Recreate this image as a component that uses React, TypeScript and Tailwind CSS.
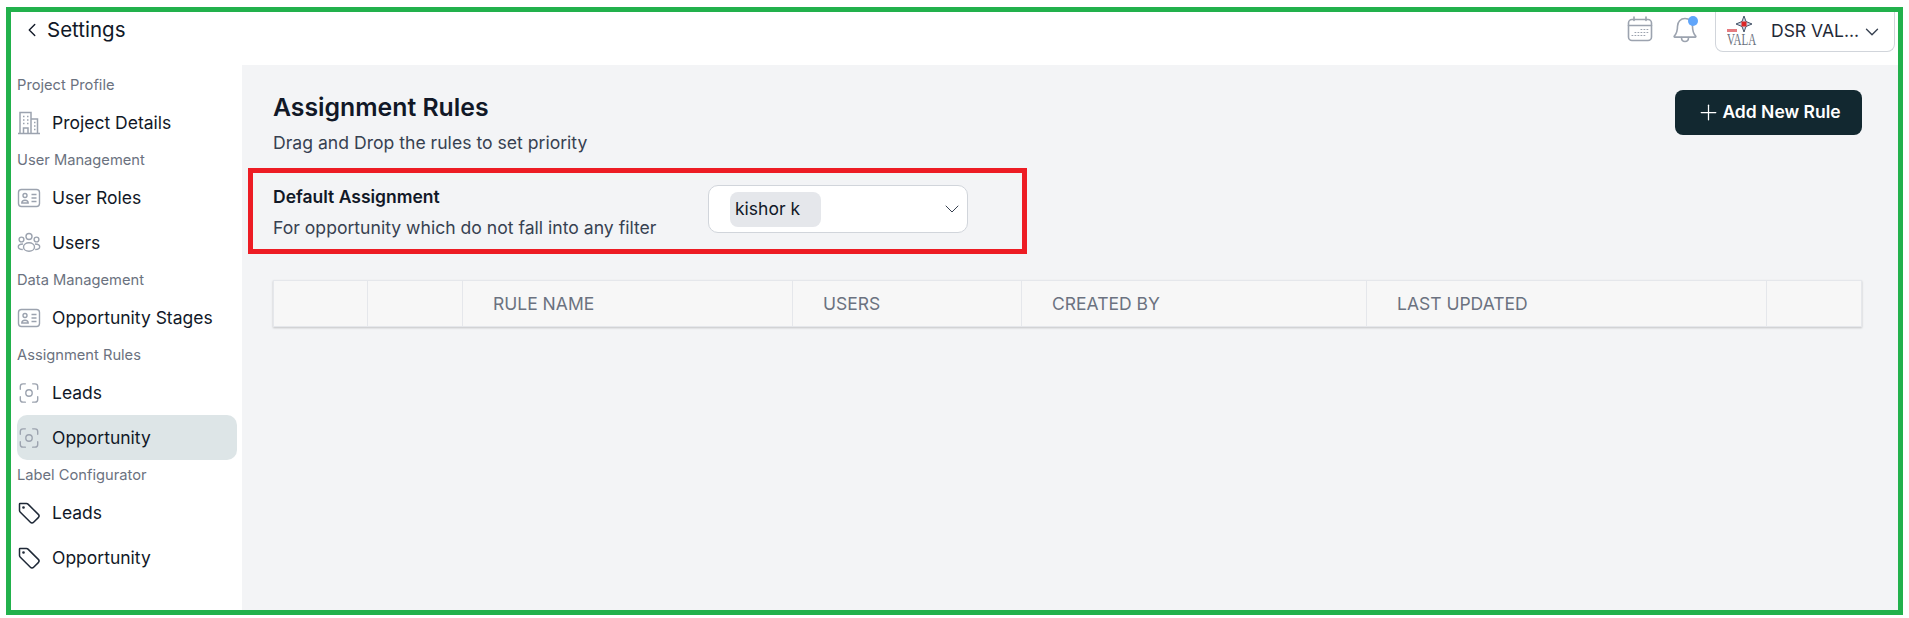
import { ChevronDown, ChevronLeft, Plus } from 'lucide-react';

const IdCard = () => (
    <svg width="24" height="24" viewBox="0 0 24 24" fill="none" stroke="#9ca3af" strokeWidth="1.4">
        <rect x="1.500" y="3.500" width="21" height="17" rx="3" />
        <circle cx="8" cy="9.500" r="2" />
        <path d="M4.800 17c0-1.800 1.400-2.800 3.200-2.800s3.200 1 3.200 2.800z" />
        <path d="M14.500 8.500h5M14.500 12h5M14.500 15.500h5" />
    </svg>
);

const Building = () => (
    <svg width="24" height="24" viewBox="0 0 24 24" fill="none" stroke="#9ca3af" strokeWidth="1.500">
        <path d="M1 22.500h22M3 22.500V1.500h11v21M14 8h6.500v14.500" />
        <path d="M6 5.500h1.500M10 5.500h1.500M6 9h1.500M10 9h1.500M6 12.500h1.500M10 12.500h1.500M6.500 22.500v-5.500h4.500v5.500M17 11.500h1.500M17 15h1.500M17 18.500h1.500" />
    </svg>
);

const Group = () => (
    <svg width="24" height="24" viewBox="0 0 24 24" fill="none" stroke="#9ca3af" strokeWidth="1.400">
        <circle cx="12" cy="5.500" r="3" />
        <circle cx="4.500" cy="8.500" r="2.400" />
        <circle cx="19.500" cy="8.500" r="2.400" />
        <path d="M6.500 16c0-2.500 2.500-4.200 5.500-4.200s5.500 1.700 5.500 4.200-2.500 4.200-5.500 4.200-5.500-1.700-5.500-4.200z" />
        <path d="M6 13c-2.700 0-4.700 1.100-4.700 2.800S3 18.500 5.800 18.500M18 13c2.700 0 4.700 1.100 4.700 2.800s-1.700 2.700-4.500 2.700" />
    </svg>
);

const Scan = () => (
    <svg width="22" height="22" viewBox="0 0 24 24" fill="none" stroke="#9ca3af" strokeWidth="1.500" strokeLinecap="round">
        <path d="M2.500 8V5a3 3 0 0 1 3-3H8M16 2h2.500a3 3 0 0 1 3 3v3M21.500 16v3a3 3 0 0 1-3 3H16M8 22H5.500a3 3 0 0 1-3-3v-3" />
        <circle cx="12" cy="12" r="3.500" />
    </svg>
);

const Label = () => (
    <svg width="24" height="24" viewBox="0 0 24 24" fill="none" stroke="#1f2937" strokeWidth="1.500" strokeLinejoin="round">
        <path d="M3 2.500h6.500c.6 0 1.100.2 1.500.6l10.300 10.300c.9.9.9 2.300 0 3.200l-4.700 4.700c-.9.900-2.300.900-3.200 0L3.100 11C2.700 10.600 2.500 10.100 2.500 9.500V3c0-.3.200-.5.500-.5z" />
        <circle cx="6.500" cy="6.500" r=".6" fill="#1f2937" />
    </svg>
);

const Calendar = () => (
    <svg width="26" height="26" viewBox="0 0 26 26" fill="none" stroke="#9ca3af" strokeWidth="1.600" strokeLinecap="round">
        <rect x="1.500" y="3.500" width="23" height="21" rx="3.500" />
        <path d="M1.500 9.500h23M7 1v3.500M19 1v3.500" />
        <path d="M14 13.500h.8M17 13.500h.8M20 13.500h.8M8 16.500h.8M11 16.500h.8M14 16.500h.8M17 16.500h.8M20 16.500h.8M5 19.500h.8M8 19.500h.8M11 19.500h.8M14 19.500h.8M17 19.500h.8" strokeWidth="1.200" />
    </svg>
);

const BellIcon = () => (
    <svg width="24" height="26" viewBox="0 0 24 26" fill="none" stroke="#9ca3af" strokeWidth="1.600" strokeLinejoin="round" strokeLinecap="round">
        <path d="M12 1.500c-4.400 0-7.500 3.300-7.500 7.800 0 4.800-1.200 7.700-3.200 9.700-.4.400-.1 1.100.5 1.100h20.400c.6 0 .9-.7.500-1.100-2-2-3.200-4.900-3.200-9.700 0-4.500-3.100-7.800-7.500-7.800z" />
        <path d="M8.500 20.500c0 2.400 1.500 4 3.500 4s3.500-1.600 3.500-4" />
    </svg>
);

const SidebarHeading = ({ children }: any) => <div className="h-[30px] pt-[5px] text-[14.7px] leading-[20px] text-[#6b7280]">{children}</div>;

const SidebarItem = ({ icon, label, active }: any) => (
    <div className={`flex h-[45px] items-center gap-[11px] rounded-[10px] text-[17.5px] text-[#111827] ${active ? 'bg-[#dde5e7]' : ''}`}>
        <div className="flex w-[24px] flex-none justify-center">{icon}</div>
        <span className="pt-[2px]">{label}</span>
    </div>
);

const Sidebar = () => (
    <aside className="w-[231px] flex-none pl-[6px] pr-[5px] pt-[5px]">
        <SidebarHeading>Project Profile</SidebarHeading>
        <SidebarItem icon={<Building />} label="Project Details" />
        <SidebarHeading>User Management</SidebarHeading>
        <SidebarItem icon={<IdCard />} label="User Roles" />
        <SidebarItem icon={<Group />} label="Users" />
        <SidebarHeading>Data Management</SidebarHeading>
        <SidebarItem icon={<IdCard />} label="Opportunity Stages" />
        <SidebarHeading>Assignment Rules</SidebarHeading>
        <SidebarItem icon={<Scan />} label="Leads" />
        <SidebarItem icon={<Scan />} label="Opportunity" active />
        <SidebarHeading>Label Configurator</SidebarHeading>
        <SidebarItem icon={<Label />} label="Leads" />
        <SidebarItem icon={<Label />} label="Opportunity" />
    </aside>
);

const Logo = () => (
    <div className="relative h-[30px] w-[30px] flex-none">
        <svg className="absolute left-[9px] -top-[1px]" width="16" height="16" viewBox="0 0 16 16">
            <path d="M8 0l2 5.500L16 8l-6 2.500L8 16l-2-5.500L0 8l6-2.500z" fill="#cbd5e1" stroke="#475569" strokeWidth="1" />
            <rect x="5.500" y="5.500" width="5" height="5" fill="#dc2626" />
        </svg>
        <div className="absolute left-0 top-[12px] h-[3px] w-[10px] bg-[#e57b80]" />
        <span className="absolute left-0 top-[15px] origin-top scale-y-[1.45] font-['Liberation_Serif',serif] text-[11px] leading-[10px] text-[#6b7280]">VALA</span>
    </div>
);

const Header = () => (
    <header className="flex h-[53px] flex-none items-start justify-between">
        <div className="flex h-[36px] items-center pl-[10px] text-[20.5px] text-[#111827]">
            <ChevronLeft size={22} strokeWidth={1.5} />
            <span className="ml-[4px]">Settings</span>
        </div>
        <div className="flex items-start">
            <div className="mr-[20px] mt-[4px]">
                <Calendar />
            </div>
            <div className="relative mr-[18px] mt-[5px]">
                <BellIcon />
                <span className="absolute -right-[1px] -top-[1px] h-[10px] w-[10px] rounded-full bg-[#60a5fa]" />
            </div>
            <div className="mr-[3px] flex h-[40px] w-[180px] items-center gap-[14px] rounded-b-[8px] border border-t-0 border-[#d1d5db] pl-[11px]">
                <Logo />
                <span className="text-[17.5px] text-[#1f2937]">DSR VAL...</span>
                <ChevronDown size={22} strokeWidth={1.5} className="-ml-[12px] text-[#374151]" />
            </div>
        </div>
    </header>
);

const columns = [
    { label: '', width: 'w-[94px]' },
    { label: '', width: 'w-[95px]' },
    { label: 'Rule Name', width: 'w-[330px]' },
    { label: 'Users', width: 'w-[229px]' },
    { label: 'Created By', width: 'w-[345px]' },
    { label: 'Last Updated', width: 'w-[400px]' },
    { label: '', width: 'flex-1' },
];

const RulesTable = () => (
    <div className="mt-[26px] flex h-[47px] border border-[#e5e7eb] bg-[#f7f7f7] shadow-[0_1px_2px_rgba(0,0,0,0.2)]">
        {columns.map((col, i) => (
            <div
                key={i}
                className={`flex items-center pl-[30px] pt-[1px] text-[17.5px] uppercase text-[#6b7280] ${col.width} ${i < columns.length - 1 ? 'border-r border-[#e5e7eb]' : ''}`}
            >
                {col.label}
            </div>
        ))}
    </div>
);

export default function App() {
    return (
        <div className="h-[618px] w-[1909px] bg-white pb-[3px] pl-[6px] pr-[6px] pt-[7px] font-['Inter',sans-serif]">
            <div className="flex h-full flex-col overflow-hidden border-[5px] border-[#22b14c]">
                <Header />
                <div className="flex flex-1">
                    <Sidebar />
                    <main className="flex-1 bg-[#f3f4f6] pl-[31px] pr-[36px] pt-[25px]">
                        <div className="flex items-start justify-between">
                            <div className="pt-[1px]">
                                <h1 className="text-[24.8px] font-semibold leading-[32px] text-[#111827]">Assignment Rules</h1>
                                <p className="mt-[8px] text-[17.6px] leading-[24px] text-[#374151]">Drag and Drop the rules to set priority</p>
                            </div>
                            <button className="flex h-[45px] w-[187px] items-center justify-center gap-[1px] rounded-[8px] bg-[#122830] text-[17.5px] font-semibold text-white">
                                <Plus size={25} strokeWidth={1.2} />
                                Add New Rule
                            </button>
                        </div>
                        <div className="-ml-[25px] mt-[13px] flex h-[86px] w-[779px] items-center border-[5px] border-[#ed1c24] pl-[20px]">
                            <div className="w-[435px] pt-[3px]">
                                <div className="text-[17.5px] font-semibold leading-[24px] text-[#111827]">Default Assignment</div>
                                <div className="mt-[7px] text-[17.6px] leading-[24px] text-[#374151]">For opportunity which do not fall into any filter</div>
                            </div>
                            <div className="mb-[4px] flex h-[48px] w-[260px] items-center justify-between rounded-[10px] border border-[#d1d5db] bg-white pl-[21px] pr-[3px]">
                                <span className="flex h-[35px] w-[91px] items-center rounded-[8px] bg-[#e5e7eb] pl-[5px] text-[17.5px] text-[#111827]">kishor k</span>
                                <ChevronDown size={24} strokeWidth={1} className="text-[#374151]" />
                            </div>
                        </div>
                        <RulesTable />
                    </main>
                </div>
            </div>
        </div>
    );
}
